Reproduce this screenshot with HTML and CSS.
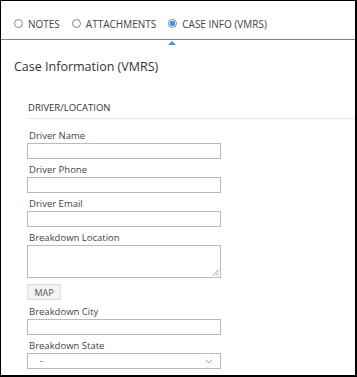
FILE: index.html
```html
<!DOCTYPE html>
<html>
<head>
<meta charset="utf-8">
<link rel="stylesheet" href="styles.css">
</head>
<body>
<div class="frame">
  <div class="tabs">
    <div class="tab"><span class="radio"></span><span class="tab-label">NOTES</span></div>
    <div class="tab"><span class="radio"></span><span class="tab-label">ATTACHMENTS</span></div>
    <div class="tab active"><span class="radio checked"></span><span class="tab-label">CASE INFO (VMRS)</span><span class="caret"></span></div>
  </div>
  <h1 class="title">Case Information (VMRS)</h1>
  <div class="section">
    <div class="section-head">DRIVER/LOCATION</div>
    <div class="fields">
      <div class="field"><label class="label">Driver Name</label><div class="input"></div></div>
      <div class="field"><label class="label">Driver Phone</label><div class="input"></div></div>
      <div class="field"><label class="label">Driver Email</label><div class="input"></div></div>
      <div class="field"><label class="label">Breakdown Location</label><div class="input textarea"><svg class="grip" width="7" height="7" viewBox="0 0 7 7"><path d="M6.5 1 L1 6.5 M6.5 4 L4 6.5" stroke="#777" stroke-width="0.8" fill="none"/></svg></div></div>
      <div class="field"><button class="btn">MAP</button></div>
      <div class="field"><label class="label">Breakdown City</label><div class="input"></div></div>
      <div class="field"><label class="label">Breakdown State</label><div class="input select"><span class="sel-val">-</span><svg class="chev" width="8" height="5" viewBox="0 0 8 5"><path d="M0.5 0.5 L4 4 L7.5 0.5" stroke="#999" stroke-width="0.9" fill="none"/></svg></div></div>
    </div>
  </div>
</div>
</body>
</html>
```
FILE: styles.css
```css
* { box-sizing: border-box; }
html, body { margin: 0; padding: 0; background: #fff; }
body { font-family: "Open Sans", "Liberation Sans", sans-serif; color: #333; }
.frame {
  width: 357px;
  height: 377px;
  border-left: 1px solid #000;
  border-top: 1px solid #000;
  border-right: 2px solid #000;
  border-bottom: 2px solid #000;
  overflow: hidden;
}
.tabs {
  display: flex;
  align-items: center;
  height: 39px;
  padding-left: 13px;
  padding-top: 7px;
  gap: 12px;
  border-bottom: 1px solid #4a8fd0;
}
.tab {
  display: flex;
  align-items: center;
  gap: 5px;
  position: relative;
  font-size: 10px;
  color: #444;
}
.radio {
  width: 9px;
  height: 9px;
  border: 1px solid #888;
  border-radius: 50%;
  display: inline-block;
}
.radio.checked {
  border-color: #4a8fd0;
  background: radial-gradient(circle, #4a8fd0 0 2.6px, #fff 3px);
}
.caret {
  position: absolute;
  left: 0;
  bottom: -14px;
  width: 0;
  height: 0;
  border-left: 4px solid transparent;
  border-right: 4px solid transparent;
  border-bottom: 4px solid #4a8fd0;
}
.title {
  margin: 18px 0 0 13px;
  font-size: 12.5px;
  font-weight: normal;
  color: #333;
  line-height: 18px;
}
.section {
  margin-left: 26px;
  margin-top: 26px;
}
.section-head {
  font-size: 9.5px;
  color: #333;
  line-height: 12px;
  padding-bottom: 4px;
  padding-left: 1px;
  border-bottom: 1px solid #e6e6e6;
}
.fields {
  padding-top: 11px;
  display: flex;
  flex-direction: column;
  gap: 5px;
}
.field { display: flex; flex-direction: column; gap: 2px; }
.label { font-size: 9.5px; line-height: 11px; color: #444; padding-left: 2px; }
.input {
  width: 194px;
  height: 16px;
  border: 1px solid #bbb;
  background: #fff;
  position: relative;
}
.textarea { height: 33px; }
.grip { position: absolute; right: 1px; bottom: 1px; }
.btn {
  align-self: flex-start;
  width: 34px;
  height: 16px;
  font-family: inherit;
  font-size: 9px;
  color: #555;
  background: #f3f3f3;
  border: 1px solid #ddd;
  padding: 0;
  margin: 1px 0 1px 0;
}
.select { display: flex; align-items: center; justify-content: space-between; padding: 0 7px 0 12px; }
.sel-val { font-size: 9px; color: #555; line-height: 10px; }
```
